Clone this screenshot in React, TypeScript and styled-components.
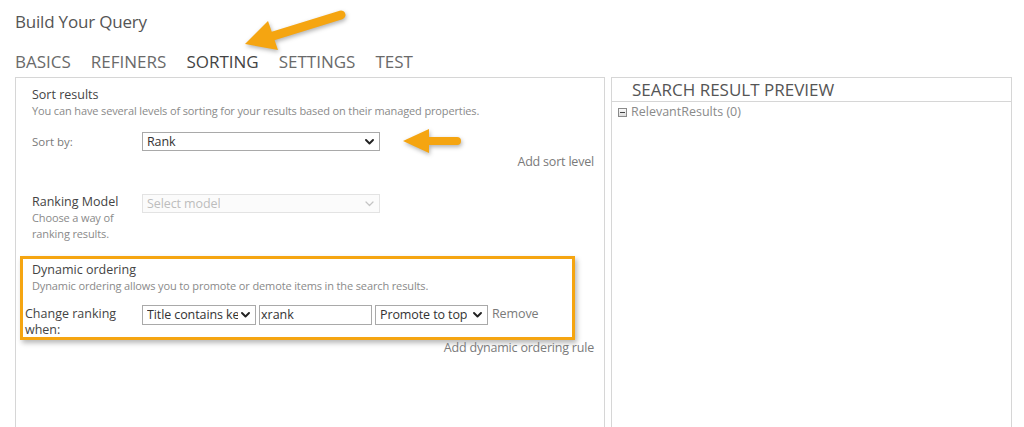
import React from "react";
import styled, { createGlobalStyle } from "styled-components";

const GlobalStyle = createGlobalStyle`
  html, body {
    margin: 0;
    padding: 0;
    background: #ffffff;
  }
  body {
    font-family: "Open Sans", "Noto Sans", sans-serif;
    overflow: hidden;
  }
  * { box-sizing: border-box; }
`;

const ACCENT = "#f5a511";

const Page = styled.div`
  position: relative;
  width: 1024px;
  height: 427px;
  padding: 10px 0 0 15px;
  overflow: hidden;
`;

const Title = styled.h1`
  margin: 0;
  font-size: 17px;
  font-weight: 400;
  line-height: 24px;
  color: #555555;
  letter-spacing: -0.2px;
`;

const Tabs = styled.nav`
  display: flex;
  gap: 20px;
  margin-top: 16px;
`;

const Tab = styled.span<{ $active?: boolean }>`
  font-size: 17px;
  line-height: 24px;
  letter-spacing: 0;
  color: ${(p) => (p.$active ? "#444444" : "#6a6a6a")};
`;

const Panels = styled.div`
  display: flex;
  gap: 6px;
  margin-top: 3px;
`;

const LeftPanel = styled.section`
  width: 590px;
  height: 360px;
  border: 1px solid #d6d6d6;
  border-bottom: none;
  padding: 9px 10px 0 16px;
  display: flex;
  flex-direction: column;
`;

const RightPanel = styled.section`
  width: 401px;
  height: 360px;
  border: 1px solid #d6d6d6;
  border-bottom: none;
`;

const PreviewHeader = styled.div`
  height: 24px;
  border-bottom: 1px solid #d6d6d6;
  padding-left: 20px;
  font-size: 17px;
  line-height: 23px;
  color: #555555;
  letter-spacing: 0;
`;

const ResultRow = styled.div`
  display: flex;
  align-items: center;
  gap: 4px;
  margin-top: 2px;
  padding-left: 6px;
  font-size: 12.5px;
  line-height: 16px;
  color: #8a8a8a;
`;

const Collapse = styled.span`
  position: relative;
  width: 9px;
  height: 9px;
  border: 1px solid #8a8a8a;
  background: linear-gradient(#fafafa, #dcdcdc);
  &::after {
    content: "";
    position: absolute;
    left: 1px;
    right: 1px;
    top: 3px;
    height: 1px;
    background: #444;
  }
`;

const SectionTitle = styled.div<{ $indent?: number }>`
  font-size: 12.5px;
  line-height: 16px;
  color: #444444;
  margin-left: ${(p) => p.$indent ?? 0}px;
`;

const Description = styled.div<{ $indent?: number }>`
  font-size: 11px;
  line-height: 16px;
  letter-spacing: -0.13px;
  color: #8a8a8a;
  margin-left: ${(p) => p.$indent ?? 0}px;
`;

const FieldRow = styled.div<{ $top: number }>`
  display: flex;
  align-items: flex-start;
  margin-top: ${(p) => p.$top}px;
`;

const FieldLabel = styled.div<{ $width: number; $dark?: boolean }>`
  width: ${(p) => p.$width}px;
  flex-shrink: 0;
  font-size: ${(p) => (p.$dark ? "12.5px" : "11.5px")};
  line-height: 16px;
  padding-top: ${(p) => (p.$dark ? 1 : 2)}px;
  color: ${(p) => (p.$dark ? "#444444" : "#7a7a7a")};
`;

const LabelBlock = styled.div`
  width: 110px;
  flex-shrink: 0;
`;

const SelectBox = styled.div<{ $width: number; $disabled?: boolean; $height?: number }>`
  width: ${(p) => p.$width}px;
  height: ${(p) => p.$height ?? 19}px;
  flex-shrink: 0;
  display: flex;
  align-items: center;
  justify-content: space-between;
  gap: 3px;
  padding: 0 5px 0 4px;
  border: 1px solid ${(p) => (p.$disabled ? "#e3e3e3" : "#a9a9a9")};
  background: ${(p) => (p.$disabled ? "#fbfbfb" : "#ffffff")};
  color: ${(p) => (p.$disabled ? "#bdbdbd" : "#333333")};
  font-size: 12.5px;
  line-height: 16px;
  white-space: nowrap;
  overflow: hidden;
`;

const SelectText = styled.span`
  overflow: hidden;
  letter-spacing: -0.1px;
`;

const TextInput = styled.div<{ $width: number }>`
  width: ${(p) => p.$width}px;
  height: 20px;
  flex-shrink: 0;
  border: 1px solid #a9a9a9;
  padding: 0 1px;
  font-size: 12.5px;
  line-height: 18px;
  color: #333333;
`;

const ActionLink = styled.div<{ $top?: number }>`
  text-align: right;
  font-size: 12.5px;
  line-height: 16px;
  letter-spacing: -0.2px;
  color: #7a7a7a;
  margin-top: ${(p) => p.$top ?? 0}px;
`;

const InlineLink = styled.span`
  font-size: 12.5px;
  line-height: 16px;
  letter-spacing: -0.1px;
  color: #7a7a7a;
  margin-left: 1px;
  padding-top: 1px;
`;

const Highlight = styled.div`
  width: 555px;
  margin: 14px 0 0 -12px;
  border: 3px solid ${ACCENT};
  padding: 3px 0 0 2px;
  height: 84px;
  box-shadow: 2px 3px 5px rgba(0, 0, 0, 0.28);
`;

const RuleRow = styled.div`
  display: flex;
  align-items: flex-start;
  gap: 3px;
  margin-top: 11px;
`;

const Arrow = styled.svg<{ $left: number; $top: number }>`
  position: absolute;
  left: ${(p) => p.$left}px;
  top: ${(p) => p.$top}px;
  overflow: visible;
  filter: drop-shadow(1px 2px 2px rgba(0, 0, 0, 0.3));
`;

function Chevron({ faint }: { faint?: boolean }) {
  return (
    <svg width="9" height="6" viewBox="0 0 9 6" style={{ flexShrink: 0 }}>
      <path
        d="M1 1 L4.5 4.5 L8 1"
        fill="none"
        stroke={faint ? "#c4c4c4" : "#222"}
        strokeWidth={faint ? 1.2 : 1.9}
        strokeLinecap="round"
        strokeLinejoin="round"
      />
    </svg>
  );
}

function Select({
  width,
  value,
  disabled,
  height,
}: {
  width: number;
  value: string;
  disabled?: boolean;
  height?: number;
}) {
  return (
    <SelectBox $width={width} $disabled={disabled} $height={height}>
      <SelectText>{value}</SelectText>
      <Chevron faint={disabled} />
    </SelectBox>
  );
}

export default function App() {
  return (
    <>
      <GlobalStyle />
      <Page>
        <Title>Build Your Query</Title>
        <Tabs>
          <Tab>BASICS</Tab>
          <Tab>REFINERS</Tab>
          <Tab $active>SORTING</Tab>
          <Tab>SETTINGS</Tab>
          <Tab>TEST</Tab>
        </Tabs>
        <Panels>
          <LeftPanel>
            <SectionTitle>Sort results</SectionTitle>
            <Description>
              You can have several levels of sorting for your results based on their managed properties.
            </Description>
            <FieldRow $top={13}>
              <FieldLabel $width={110}>Sort by:</FieldLabel>
              <Select width={238} value="Rank" />
            </FieldRow>
            <ActionLink $top={3}>Add sort level</ActionLink>
            <FieldRow $top={24}>
              <LabelBlock>
                <SectionTitle>Ranking Model</SectionTitle>
                <Description>
                  Choose a way of
                  <br />
                  ranking results.
                </Description>
              </LabelBlock>
              <Select width={238} value="Select model" disabled />
            </FieldRow>
            <Highlight>
              <SectionTitle $indent={7}>Dynamic ordering</SectionTitle>
              <Description $indent={7}>
                Dynamic ordering allows you to promote or demote items in the search results.
              </Description>
              <RuleRow>
                <FieldLabel $width={114} $dark>
                  Change ranking
                  <br />
                  when:
                </FieldLabel>
                <Select width={114} height={20} value="Title contains ke" />
                <TextInput $width={113}>xrank</TextInput>
                <Select width={113} height={20} value="Promote to top" />
                <InlineLink>Remove</InlineLink>
              </RuleRow>
            </Highlight>
            <ActionLink>Add dynamic ordering rule</ActionLink>
          </LeftPanel>
          <RightPanel>
            <PreviewHeader>SEARCH RESULT PREVIEW</PreviewHeader>
            <ResultRow>
              <Collapse />
              RelevantResults (0)
            </ResultRow>
          </RightPanel>
        </Panels>

        <Arrow $left={235} $top={5} width={120} height={55} viewBox="0 0 120 55">
          <line x1="38" y1="31" x2="106" y2="10" stroke={ACCENT} strokeWidth="9" strokeLinecap="round" />
          <polygon points="10,39 43,45 33,16" fill={ACCENT} />
        </Arrow>
        <Arrow $left={400} $top={126} width={64} height={30} viewBox="0 0 64 30">
          <line x1="26" y1="15" x2="57" y2="15" stroke={ACCENT} strokeWidth="8" strokeLinecap="round" />
          <polygon points="3,15 29,3 29,27" fill={ACCENT} />
        </Arrow>
      </Page>
    </>
  );
}
